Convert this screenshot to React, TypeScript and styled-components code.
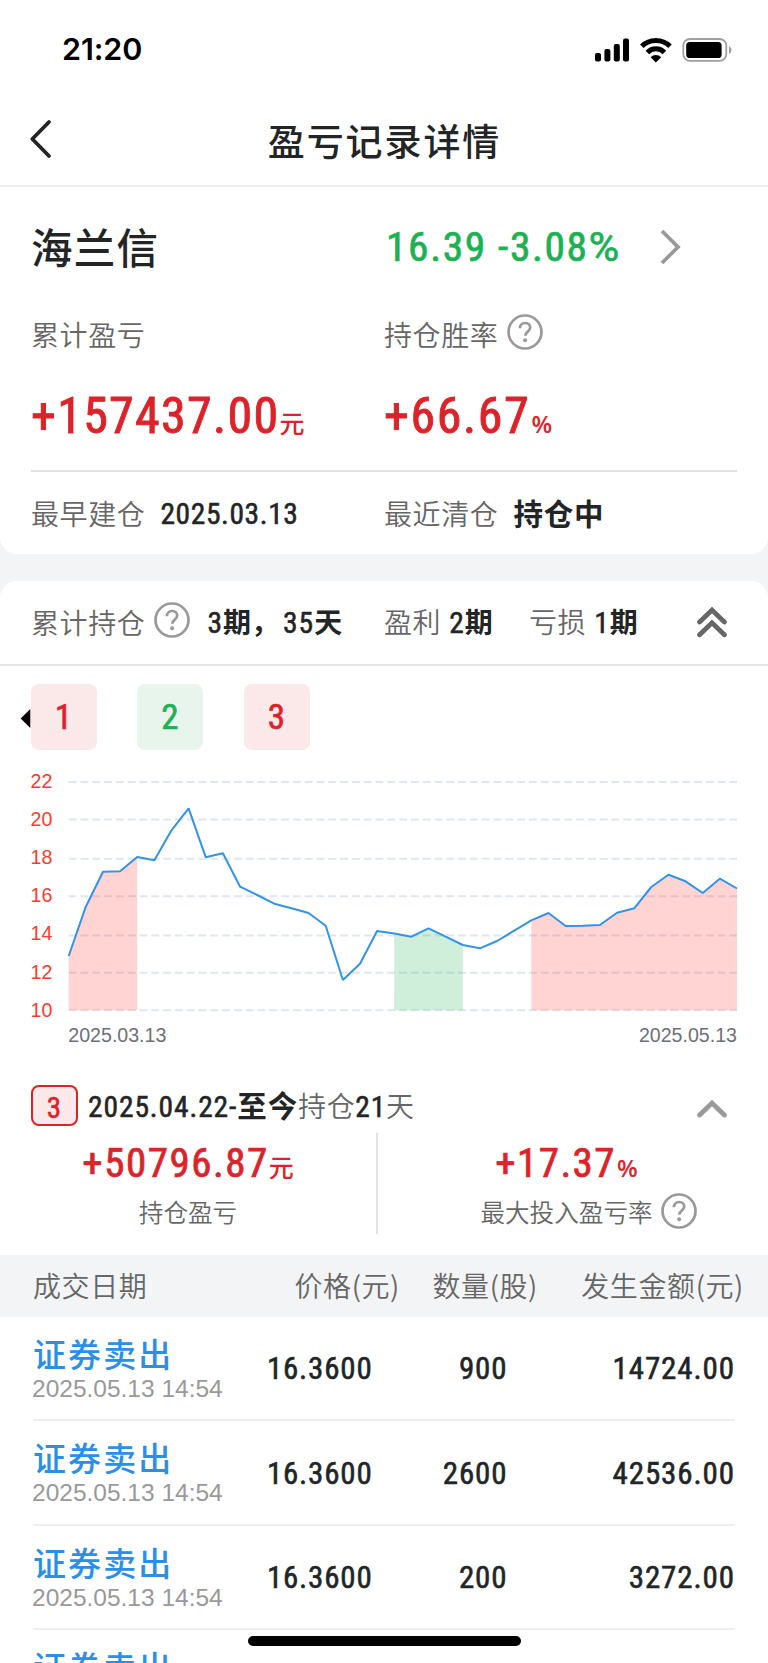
import React from 'react';
import styled, { createGlobalStyle, css } from 'styled-components';

const RED = '#dc2329';
const GREEN = '#1bb254';
const INK = '#222426';
const GREY = '#666666';

const Global = createGlobalStyle`
  * { box-sizing: border-box; }
  html, body { margin: 0; padding: 0; background: #fff; overflow: hidden; }
  body { font-family: 'Noto Sans CJK SC', sans-serif; color: ${INK}; }
`;

const Screen = styled.div`
  width: 768px;
  height: 1663px;
  overflow: hidden;
  position: relative;
  display: flex;
  flex-direction: column;
  background: #fff;
`;

/* ---------- text ---------- */

type TextProps = { $size: number; $color?: string; $gap?: number; $weight?: number };

const Cn = styled.span<TextProps>`
  font-size: ${p => p.$size}px;
  line-height: 1;
  color: ${p => p.$color ?? GREY};
  letter-spacing: ${p => p.$gap ?? 0}px;
  font-weight: ${p => p.$weight ?? 350};
  white-space: nowrap;
`;

const Num = styled.span<TextProps & { $drop?: number; $wide?: boolean }>`
  font-family: Roboto, sans-serif;
  font-stretch: ${p => (p.$wide ? 100 : 84)}%;
  font-size: ${p => p.$size}px;
  line-height: 1;
  color: ${p => p.$color ?? INK};
  letter-spacing: ${p => p.$gap ?? 0}px;
  font-weight: 400;
  -webkit-text-stroke: 0.018em currentColor;
  padding-top: ${p => p.$drop ?? 0}px;
  white-space: nowrap;
`;

const Percent = styled.span`
  font: 600 24px/1 'Open Sans', sans-serif;
  color: ${RED};
  margin-left: 1px;
`;

/* ---------- top bars ---------- */

const StatusBar = styled.header`
  flex: none;
  height: 93px;
  padding: 6px 35px 0 62px;
  display: flex;
  align-items: center;
  justify-content: space-between;
`;

const Clock = styled.span`
  font: 600 30.5px/1 Inter, sans-serif;
  letter-spacing: -0.1px;
  color: #000;
`;

const NavBar = styled.nav`
  flex: none;
  height: 94px;
  padding: 0 29px;
  display: grid;
  grid-template-columns: 60px 1fr 60px;
  align-items: center;
  border-bottom: 2px solid #ededed;
`;

const NavTitle = styled.h1`
  margin: 0;
  padding: 2px 0 0 1px;
  text-align: center;
  font-size: 37px;
  line-height: 1;
  letter-spacing: 1.9px;
  font-weight: 500;
`;

/* ---------- summary card ---------- */

const Backdrop = styled.main`
  flex: 1;
  background: #f3f4f6;
`;

const Summary = styled.section`
  height: 367px;
  padding: 0 31px;
  background: #fff;
  border-radius: 0 0 17px 17px;
`;

const Pair = styled.div<{ $h: number }>`
  height: ${p => p.$h}px;
  display: grid;
  grid-template-columns: 353px 1fr;
  align-items: center;
`;

const Cell = styled.div`
  display: flex;
  align-items: center;
`;

const Amount = styled.div<{ $drop?: number }>`
  display: flex;
  align-items: baseline;
  padding-top: ${p => p.$drop ?? 0}px;
`;

const Rule = styled.div`
  height: 2px;
  background: #e2e2e2;
`;

const Space = styled.span<{ $w: number }>`
  flex: none;
  width: ${p => p.$w}px;
`;

/* ---------- holdings card ---------- */

const Holdings = styled.section`
  margin-top: 27px;
  background: #fff;
  border-radius: 17px 17px 0 0;
`;

const HoldingsHead = styled.div`
  height: 85px;
  padding: 0 41px 2px 31px;
  display: grid;
  grid-template-columns: 353px 145px 1fr auto;
  align-items: center;
  border-bottom: 2px solid #e6e6e6;
`;

const Tabs = styled.div`
  height: 84px;
  padding: 18px 0 0 20px;
  display: flex;
  align-items: center;
`;

const Tab = styled.div<{ $gain: boolean }>`
  width: 66px;
  height: 66px;
  margin-right: 40.4px;
  border-radius: 8px;
  display: flex;
  align-items: center;
  justify-content: center;
  padding: 1px 1px 0 0;
  ${p => p.$gain
    ? css`background: #fbe8e9; color: ${RED};`
    : css`background: #e8f5ec; color: ${GREEN};`}
`;

const ChartSvg = styled.svg`
  display: block;
  width: 768px;
  height: 325px;
  font-family: 'Liberation Sans', sans-serif;
  font-size: 19.6px;
`;

const PeriodHead = styled.div`
  height: 58px;
  padding: 2px 41px 0 31px;
  display: flex;
  align-items: center;
  justify-content: space-between;
`;

const Badge = styled.span`
  width: 47px;
  height: 41px;
  margin-right: 10px;
  border: 2px solid ${RED};
  border-radius: 8px;
  background: #fbe8e9;
  display: flex;
  align-items: center;
  justify-content: center;
  padding-top: 7px;
  padding-right: 1px;
`;

const Stats = styled.div`
  height: 101px;
  display: grid;
  grid-template-columns: 378px 377px;
`;

const Stat = styled.div<{ $divided?: boolean }>`
  display: grid;
  grid-template-rows: 60px 36px;
  justify-items: center;
  align-items: center;
  ${p => p.$divided && css`border-right: 2px solid #e2e2e2;`}
`;

const StatLabel = styled.div`
  position: relative;
  display: flex;
`;

const Trailing = styled.span`
  position: absolute;
  left: 100%;
  top: 50%;
  margin: -18px 0 0 8px;
  display: flex;
`;

/* ---------- trades ---------- */

const TableHead = styled.div`
  height: 62px;
  margin-top: 21px;
  padding: 0 24px 2px 33px;
  display: grid;
  grid-template-columns: 186px 181px 138px 1fr;
  align-items: center;
  justify-items: end;
  background: #f3f4f6;
  > :first-child { justify-self: start; }
`;

const Trade = styled.div`
  height: 104.4px;
  margin: 0 33px;
  padding-top: 1px;
  display: grid;
  grid-template-columns: 200px 139.5px 135px 1fr;
  align-items: center;
  justify-items: end;
  border-bottom: 2px solid #efefef;
`;

const TradeInfo = styled.div`
  justify-self: start;
  padding-top: 1px;
  display: flex;
  flex-direction: column;
  gap: 7px;
`;

const Stamp = styled.span`
  font: 24.5px/1 'Liberation Sans', sans-serif;
  color: #999;
  margin-left: -1px;
  white-space: nowrap;
`;

const HomeIndicator = styled.div`
  position: absolute;
  left: 247.5px;
  bottom: 17px;
  width: 273.5px;
  height: 10px;
  border-radius: 5px;
  background: #000;
`;

/* ---------- icons ---------- */

const StatusIcons = () => (
  <svg width="140" height="28" viewBox="593 35 140 28">
    <rect x="595" y="52" width="6" height="8.5" rx="2" />
    <rect x="604.4" y="48" width="6" height="12.5" rx="2" />
    <rect x="613.8" y="43" width="6" height="17.5" rx="2" />
    <rect x="623" y="37.5" width="6" height="23" rx="2" />
    <path fill="none" stroke="#000" strokeWidth="5" d="M641.8 45.200a20 20 0 0 1 28.200 0M647.400 51.400a12 12 0 0 1 17 0" />
    <path d="M650.6 56.200a7.4 7.4 0 0 1 10.6 0l-5.3 5.200z" />
    <rect x="683.3" y="38" width="43" height="21.8" rx="6.5" fill="none" stroke="#a0a0a0" strokeWidth="1.8" />
    <rect x="686.2" y="41" width="35.4" height="16" rx="3.6" />
    <path d="M729 45.3c3.4 1.4 3.4 6.2 0 7.6z" fill="#a0a0a0" />
  </svg>
);

const BackIcon = () => (
  <svg width="24" height="40" viewBox="0 0 24 40">
    <path d="M20 3 3.300 20l16.700 17" fill="none" stroke={INK} strokeWidth="3.8" strokeLinecap="round" strokeLinejoin="round" />
  </svg>
);

const MoreIcon = () => (
  <svg width="22" height="36" viewBox="0 0 22 36">
    <path d="M2 2 18 18 2 34" fill="none" stroke="#999" strokeWidth="3.8" />
  </svg>
);

const HelpSvg = styled.svg`
  flex: none;
  margin-bottom: 3px;
`;

const HelpIcon = () => (
  <HelpSvg width="36" height="36" viewBox="0 0 36 36" fill="none" stroke="#999">
    <circle cx="18" cy="18" r="16.500" strokeWidth="2.7" />
    <path d="M12.900 14.200c0-3.300 2.200-5.200 5.200-5.200s5.100 1.800 5.100 4.600c0 4-5 4-5 8.200" strokeWidth="2.700" />
    <circle cx="18.100" cy="26.300" r="2" fill="#999" stroke="none" />
  </HelpSvg>
);

const CollapseAllIcon = () => (
  <svg width="30" height="32" viewBox="0 0 30 32" fill="none" stroke="#666" strokeWidth="4.800" strokeLinecap="round">
    <path d="M2.600 16 15 4l12.400 12M2.600 28.800 15 16.800l12.400 12" />
  </svg>
);

const CollapseSvg = styled.svg`
  margin-top: 8px;
`;

const CollapseIcon = () => (
  <CollapseSvg width="30" height="20" viewBox="0 0 30 20" fill="none" stroke="#999" strokeWidth="4.800" strokeLinecap="round">
    <path d="M2.600 16 15 4l12.400 12" />
  </CollapseSvg>
);

const ArrowLeft = () => (
  <svg width="11" height="22" viewBox="0 0 11 22">
    <path d="M10.300 3v19L.700 12.500z" />
  </svg>
);

/* ---------- price chart ---------- */

const GRID = [32, 69.5, 108.7, 146.2, 185.5, 222.8, 260.3];
const LEVELS = [22, 20, 18, 16, 14, 12, 10];
const X0 = 68.7;
const STEP = 17.135;
const LINE = [
  206, 156.700, 121.700, 121.300, 107, 110.300, 80.300, 58.300, 107.300, 103.300, 136.700, 145, 153.700, 158.300,
  163, 175.700, 230, 213.700, 181, 183.500, 186.700, 178.300, 186.700, 195, 198.300, 191, 180.700, 170.300, 163,
  176, 175.700, 175, 162.700, 158.300, 137, 124.700, 131.300, 143, 128.700, 138.500,
];
const at = (i: number) => `${(X0 + i * STEP).toFixed(1)},${LINE[i]}`;
const path = (a: number, b: number) =>
  Array.from({ length: b - a + 1 }, (_, k) => at(a + k)).join(' ');
const PERIODS = [
  { from: 0, to: 4, fill: 'rgba(255,59,48,.22)' },
  { from: 19, to: 23, fill: 'rgba(27,178,84,.21)' },
  { from: 27, to: 39, fill: 'rgba(255,59,48,.22)' },
];

const Chart = () => (
  <ChartSvg viewBox="0 0 768 325">
    {GRID.map(y => (
      <line key={y} x1={X0} x2={737} y1={y} y2={y} stroke="#e0e6f1" strokeWidth="2" strokeDasharray="7.900 3.900" />
    ))}
    {LEVELS.map((v, i) => (
      <text key={v} x="30.500" y={37.800 + i * 38.15} fill="#ff3b30">{v}</text>
    ))}
    {PERIODS.map(p => (
      <polygon
        key={p.from}
        fill={p.fill}
        points={`${X0 + p.from * STEP},260.3 ${path(p.from, p.to)} ${X0 + p.to * STEP},260.3`}
      />
    ))}
    <polyline points={path(0, 39)} fill="none" stroke="#3393e8" strokeWidth="2" strokeLinejoin="bevel" />
    <text x="68.300" y="292.300" fill="#6e7079">2025.03.13</text>
    <text x="737" y="292.300" fill="#6e7079" textAnchor="end">2025.05.13</text>
  </ChartSvg>
);

/* ---------- page ---------- */

const TRADES = [
  { time: '2025.05.13 14:54', price: '16.3600', qty: '900', total: '14724.00' },
  { time: '2025.05.13 14:54', price: '16.3600', qty: '2600', total: '42536.00' },
  { time: '2025.05.13 14:54', price: '16.3600', qty: '200', total: '3272.00' },
  { time: '', price: '', qty: '', total: '' },
];

const Label = ({ children }: { children: React.ReactNode }) => <Cn $size={28} $gap={0.6}>{children}</Cn>;

const Count = ({ n, unit }: { n: string; unit: string }) => (
  <>
    <Num $size={29.5} $gap={1}>{n}</Num>
    <Cn $size={28} $weight={700} $color={INK}>{unit}</Cn>
  </>
);

export default function App() {
  return (
    <Screen>
      <Global />
      <StatusBar>
        <Clock>21:20</Clock>
        <StatusIcons />
      </StatusBar>
      <NavBar>
        <BackIcon />
        <NavTitle>盈亏记录详情</NavTitle>
      </NavBar>
      <Backdrop>
        <Summary>
          <Pair $h={119}>
            <Cn $size={41.5} $gap={1.2} $weight={500} $color={INK}>海兰信</Cn>
            <Cell>
              <Space $w={2} />
              <Num $size={41.5} $color={GREEN} $gap={1.6}>16.39 -3.08</Num>
              <Num $size={41.5} $color={GREEN} $wide>%</Num>
              <Space $w={41} />
              <MoreIcon />
            </Cell>
          </Pair>
          <Pair $h={55}>
            <Label>累计盈亏</Label>
            <Cell><Label>持仓胜率</Label><Space $w={9} /><HelpIcon /></Cell>
          </Pair>
          <Pair $h={109}>
            <Amount>
              <Num $size={50} $color={RED} $gap={1.3}>+157437.00</Num>
              <Cn $size={25} $color={RED} $weight={500}>元</Cn>
            </Amount>
            <Amount>
              <Num $size={50} $color={RED} $gap={1.6}>+66.67</Num>
              <Percent>%</Percent>
            </Amount>
          </Pair>
          <Rule />
          <Pair $h={82}>
            <Cell>
              <Label>最早建仓</Label><Space $w={15} />
              <Num $size={29.5} $gap={0.6} $drop={4}>2025.03.13</Num>
            </Cell>
            <Cell>
              <Label>最近清仓</Label><Space $w={15} />
              <Cn $size={29.5} $gap={0.8} $weight={700} $color={INK}>持仓中</Cn>
            </Cell>
          </Pair>
        </Summary>

        <Holdings>
          <HoldingsHead>
            <Cell>
              <Label>累计持仓</Label><Space $w={9} /><HelpIcon /><Space $w={17} />
              <Amount $drop={2}>
                <Count n="3" unit="期，" />
                <Space $w={4} />
                <Count n="35" unit="天" />
              </Amount>
            </Cell>
            <Amount $drop={2}><Label>盈利</Label><Space $w={8} /><Count n="2" unit="期" /></Amount>
            <Amount $drop={2}><Label>亏损</Label><Space $w={8} /><Count n="1" unit="期" /></Amount>
            <CollapseAllIcon />
          </HoldingsHead>
          <Tabs>
            <ArrowLeft />
            <Tab $gain><Num $size={35} $color={RED}>1</Num></Tab>
            <Tab $gain={false}><Num $size={35} $color={GREEN}>2</Num></Tab>
            <Tab $gain><Num $size={35} $color={RED}>3</Num></Tab>
          </Tabs>
          <Chart />
          <PeriodHead>
            <Cell>
              <Badge><Num $size={29} $color={RED}>3</Num></Badge>
              <Amount $drop={2}>
                <Num $size={29.5} $gap={0.9}>2025.04.22-</Num>
                <Cn $size={29.5} $gap={0.9} $weight={700} $color={INK}>至今</Cn>
                <Label>持仓</Label>
                <Num $size={29.5} $gap={0.8}>21</Num>
                <Label>天</Label>
              </Amount>
            </Cell>
            <CollapseIcon />
          </PeriodHead>
          <Stats>
            <Stat $divided>
              <Amount>
                <Num $size={41} $color={RED} $gap={1.5}>+50796.87</Num>
                <Cn $size={25} $color={RED} $weight={500}>元</Cn>
              </Amount>
              <StatLabel><Cn $size={24.6}>持仓盈亏</Cn></StatLabel>
            </Stat>
            <Stat>
              <Amount>
                <Num $size={41} $color={RED} $gap={1.4}>+17.37</Num>
                <Percent>%</Percent>
              </Amount>
              <StatLabel>
                <Cn $size={24.6}>最大投入盈亏率</Cn>
                <Trailing><HelpIcon /></Trailing>
              </StatLabel>
            </Stat>
          </Stats>
          <TableHead>
            <Label>成交日期</Label>
            <Label>价格(元)</Label>
            <Label>数量(股)</Label>
            <Label>发生金额(元)</Label>
          </TableHead>
          {TRADES.map((t, i) => (
            <Trade key={i}>
              <TradeInfo>
                <Cn $size={33} $gap={2.1} $weight={500} $color="#2b8fe8">证券卖出</Cn>
                <Stamp>{t.time || '\u00a0'}</Stamp>
              </TradeInfo>
              <Num $size={31} $gap={0.8}>{t.price}</Num>
              <Num $size={31} $gap={0.9}>{t.qty}</Num>
              <Num $size={31} $gap={0.9}>{t.total}</Num>
            </Trade>
          ))}
        </Holdings>
      </Backdrop>
      <HomeIndicator />
    </Screen>
  );
}
